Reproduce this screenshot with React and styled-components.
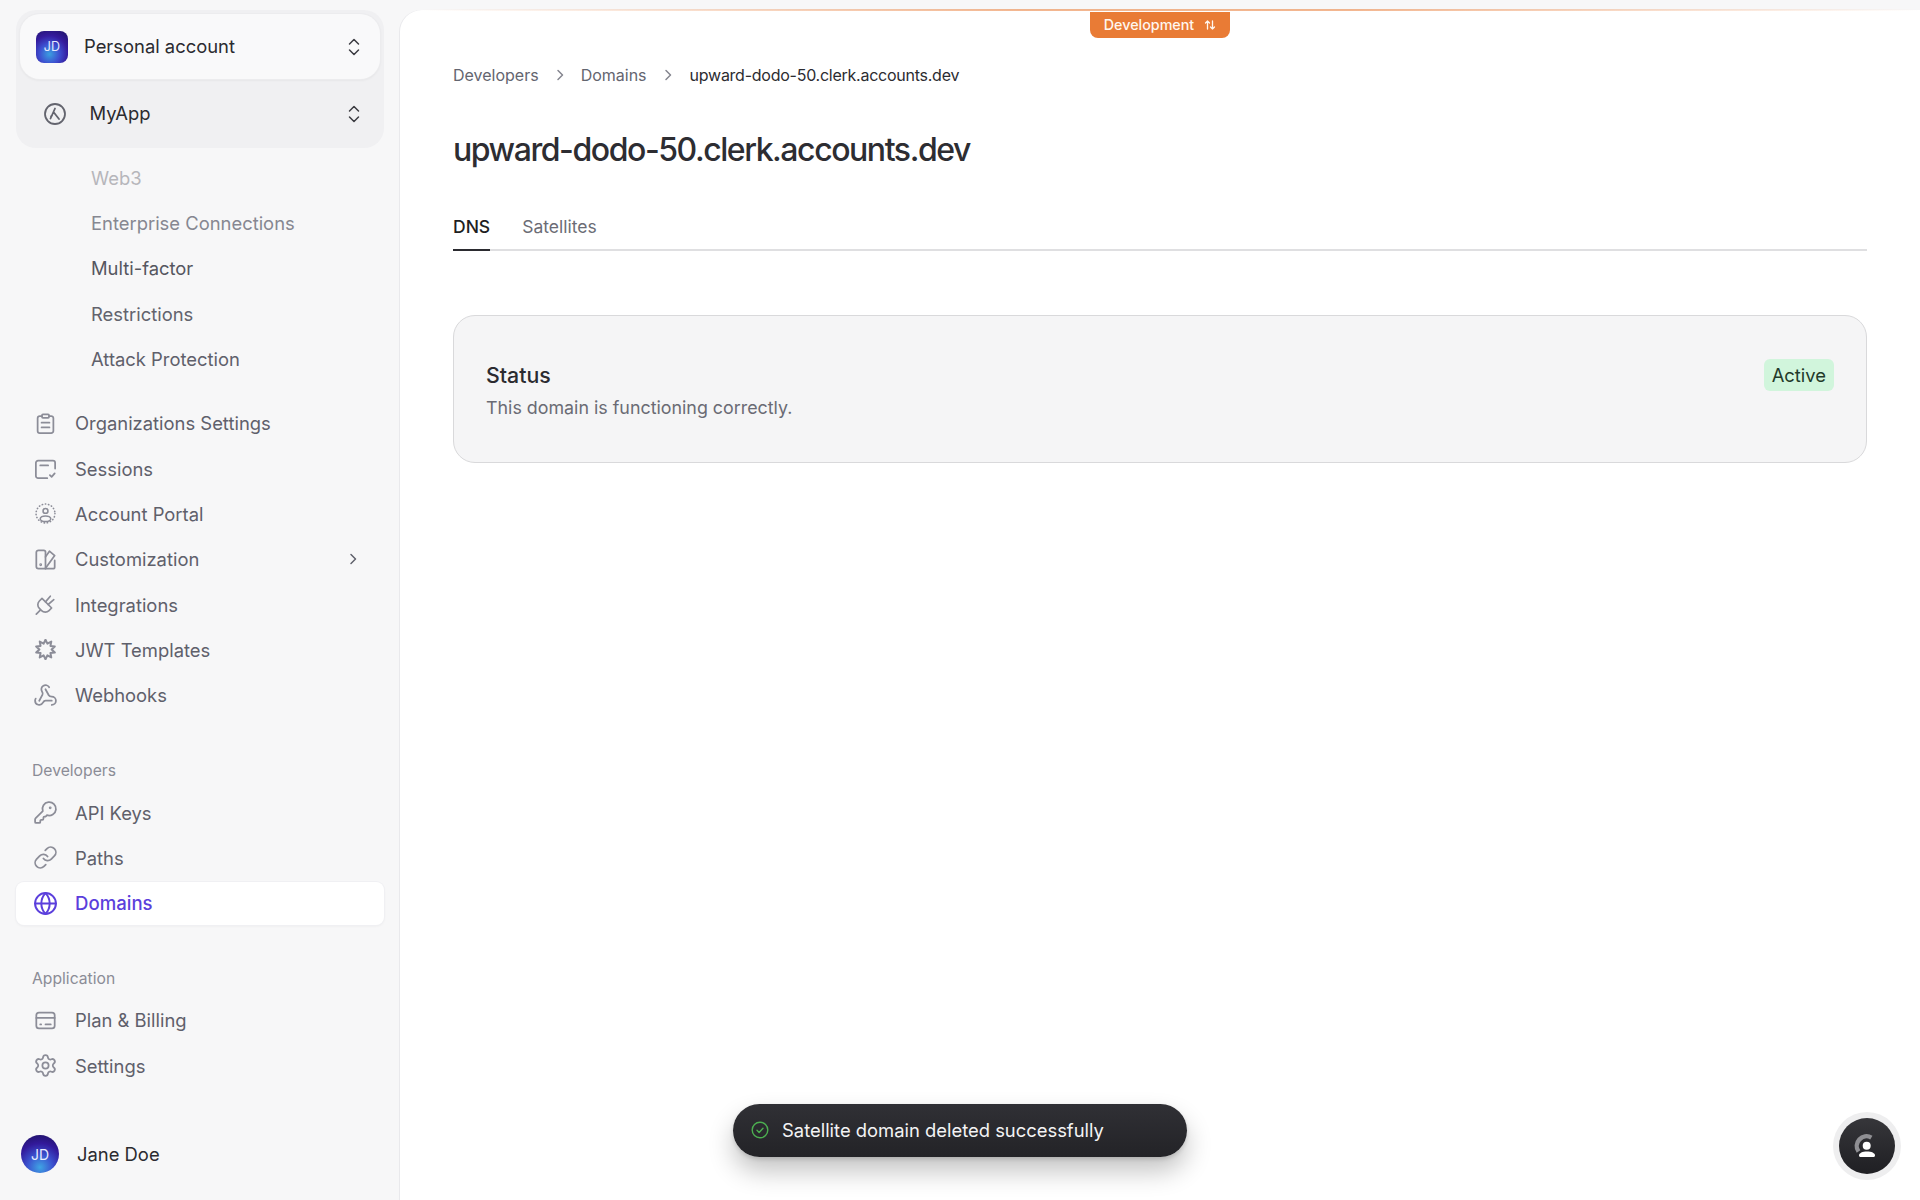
import React from "react";
import styled, { createGlobalStyle } from "styled-components";
import { Webhook, KeyRound, Link as LinkIcon, Globe, Settings } from "lucide-react";

const Global = createGlobalStyle`
  html, body { margin: 0; padding: 0; height: 100%; background: #f7f7f8; }
  body { font-family: Inter, "Liberation Sans", sans-serif; overflow: hidden; }
  * { box-sizing: border-box; }
`;

const Page = styled.div`display: flex; height: 1200px; width: 1920px;`;
const Sidebar = styled.aside`
  width: 400px; flex: none; height: 100%; display: flex; flex-direction: column;
  padding: 10px 16px 27px; background: #f7f7f8;
`;
const SwitchGroup = styled.div`
  background: #f0f0f2; border-radius: 20px; padding: 4px; height: 138px; flex: none;
`;
const AccountCard = styled.div`
  height: 65px; border-radius: 20px; background: #f9f9fa; display: flex; align-items: center;
  padding: 0 20px 0 16px; box-shadow: 0 0 0 1px #ececee, 0 1px 3px rgba(0,0,0,.08);
`;
const Tile = styled.div`
  width: 32px; height: 32px; border-radius: 8px; flex: none; color: #e4e8ff; font-size: 12.5px;
  display: flex; align-items: center; justify-content: center; letter-spacing: .2px;
  background: radial-gradient(circle at 42% 72%, #3a9fe0 0%, #3d4fd0 34%, #351c9e 62%, #1d1261 100%);
`;
const SwitchLabel = styled.span`
  flex: 1; font-size: 18.4px; color: #2b2b30; margin-left: ${p => p.$gap}px; padding-bottom: 2px;
`;
const ProjectRow = styled.div`
  height: 69px; display: flex; align-items: center; padding: 0 20px 0 24px; color: #6f707a;
`;
const SubList = styled.div`margin-top: 7px; flex: none;`;
const SubItem = styled.div`
  height: 45.33px; display: flex; align-items: center; padding-left: 75px; font-size: 18.4px;
  color: ${p => p.$tone};
`;
const MainList = styled.div`margin-top: 19px; flex: none;`;
const NavRow = styled.div`
  height: 45.33px; display: flex; align-items: center; padding: 0 26px 0 19px; font-size: 18.4px;
  color: #5f606b; position: relative;
  svg.nav { width: 21px; height: 21px; flex: none; color: #8c8d98; margin-right: 19px; }
  svg.lucide { width: 25px; height: 25px; margin-left: -2px; margin-right: 17px; }
`;
const ActiveRow = styled(NavRow)`
  color: #5b3fdc; font-weight: 500; font-size: 18.6px; background: #fff; border-radius: 8px; height: 43px; margin: 1px 0;
  box-shadow: 0 0 0 1px #f0f0f3, 0 1px 3px rgba(0,0,0,.06);
  svg.nav { color: #5b3fdc; }
`;
const NavText = styled.span`flex: 1;`;
const SectionLabel = styled.div`
  height: 20px; line-height: 20px; font-size: 15.7px; color: #8b8c96; padding-left: 16px;
  margin: ${p => p.$top}px 0 ${p => p.$bottom}px;
`;
const Footer = styled.div`margin-top: auto; display: flex; align-items: center; padding-left: 5px;`;
const RoundAvatar = styled.div`
  width: 38px; height: 38px; border-radius: 50%; flex: none; color: #e6eaff; font-size: 14px;
  display: flex; align-items: center; justify-content: center;
  background: radial-gradient(circle at 50% 85%, #3fa4e4 0%, #3b52cf 34%, #32199a 64%, #1a1058 100%);
`;
const UserName = styled.span`margin-left: 18px; font-size: 18.4px; color: #2b2b30;`;

const Main = styled.main`
  flex: 1; margin-top: 10px; background: #fff; border-top-left-radius: 22px;
  box-shadow: -1px 0 0 #e9e9ec; padding: 0 53px; position: relative; min-width: 0;
`;
const TopLine = styled.div`
  position: absolute; left: 20px; right: 0; top: -1px; height: 2px;
  background: linear-gradient(90deg, rgba(233,123,53,0) 0%, rgba(233,123,53,.55) 40%, rgba(233,123,53,.55) 62%, rgba(233,123,53,0) 100%);
`;
const EnvBadge = styled.div`
  position: absolute; left: 690px; top: 2px; width: 140px; height: 26px; background: #e97b35; color: #fff6ef;
  border-radius: 0 0 8px 8px; font-size: 14.3px; font-weight: 500; display: flex; align-items: center;
  justify-content: center; gap: 10px; padding-bottom: 1px;
`;
const Crumbs = styled.nav`
  display: flex; align-items: center; gap: 16px; font-size: 16px; color: #64656f; padding-top: 54px; height: 76px;
`;
const CrumbCurrent = styled.span`color: #2c2c31; letter-spacing: -.25px; margin-left: 1px;`;
const Title = styled.h1`
  margin: 43px 0 0; font-size: 32px; line-height: 42px; font-weight: 500; color: #2d2d32; letter-spacing: -1.44px;
`;
const Tabs = styled.div`
  margin-top: 31px; display: flex; gap: 32px; border-bottom: 2px solid #dfdfe1; height: 49px; font-size: 17.5px;
`;
const Tab = styled.div`
  height: 49px; padding-top: 14px; color: ${p => (p.$active ? "#1e1e22" : "#6b6c75")};
  border-bottom: 2px solid ${p => (p.$active ? "#2b2b30" : "transparent")};
  font-weight: ${p => (p.$active ? 500 : 400)};
`;
const StatusCard = styled.section`
  margin-top: 64px; height: 148px; border: 1.5px solid #d9d9db; border-radius: 22px; background: #f5f5f6;
  display: flex; justify-content: space-between; padding: 46px 32px 0;
`;
const StatusTitle = styled.div`font-size: 21.3px; font-weight: 500; color: #2b2b30; line-height: 26px;`;
const StatusText = styled.div`font-size: 17.85px; color: #6a6b74; line-height: 26px; margin-top: 7px;`;
const Pill = styled.div`
  height: 32px; padding: 0 8px; margin-top: -3px; border-radius: 6px; background: #d1f5dc; color: #233a2a; font-size: 18.4px;
  display: flex; align-items: center;
`;
const Toast = styled.div`
  position: absolute; left: 333px; top: 1094px; width: 454px; height: 53px; border-radius: 27px;
  background: linear-gradient(180deg, #303035, #232327); color: #f3f3f4; font-size: 18.4px;
  display: flex; align-items: center; padding: 0 0 1px 18px; gap: 13px;
  box-shadow: 0 14px 26px rgba(0,0,0,.24), 0 2px 4px rgba(0,0,0,.14);
`;
const Fab = styled.div`
  position: absolute; left: 1433px; top: 1102px; width: 68px; height: 68px; border-radius: 50%;
  background: #eeeeef; display: flex; align-items: center; justify-content: center;
`;
const FabInner = styled.div`
  width: 56px; height: 56px; border-radius: 50%; background: linear-gradient(180deg, #36363a, #1f1f23);
  display: flex; align-items: center; justify-content: center;
`;

const Ico = ({ children, size = 21, stroke = 2 }) => (
  <svg className="nav" viewBox="0 0 24 24" width={size} height={size} fill="none" stroke="currentColor"
    strokeWidth={stroke} strokeLinecap="round" strokeLinejoin="round">{children}</svg>
);
const Updown = () => (
  <svg width="12" height="18" viewBox="0 0 12 18" fill="none" stroke="#3b3b41" strokeWidth="1.5" strokeLinecap="round" strokeLinejoin="round">
    <path d="M1.5 6 6 1.5 10.5 6" /><path d="M1.5 12 6 16.5 10.5 12" />
  </svg>
);
const Chevron = ({ color = "#5f606b" }) => (
  <svg width="10" height="12" viewBox="0 0 10 12" fill="none" stroke={color} strokeWidth="1.5" strokeLinecap="round" strokeLinejoin="round">
    <path d="M3 1.5 7.5 6 3 10.5" />
  </svg>
);
const gearPts = Array.from({ length: 20 }, (_, i) => {
  const a = (i * Math.PI) / 10;
  const r = i % 2 ? 7 : 11.2;
  return `${(12 + r * Math.sin(a)).toFixed(2)},${(12 - r * Math.cos(a)).toFixed(2)}`;
}).join(" ");

const icons = {
  org: <Ico><path d="M8 3.5H5.5A2.5 2.5 0 0 0 3 6v14.500A2.500 2.500 0 0 0 5.500 23h13a2.500 2.500 0 0 0 2.500-2.500V6a2.500 2.500 0 0 0-2.500-2.500H16" /><rect x="8" y="1.500" width="8" height="4" rx="1" /><path d="M7.500 11h9M7.500 16.500h9" /></Ico>,
  sessions: <Ico><path d="M23 12V5.500A2.500 2.500 0 0 0 20.500 3h-17A2.500 2.500 0 0 0 1 5.500v15A2.500 2.500 0 0 0 3.500 23H14" /><path d="M6 8.500h9M17 19.500l2 2 3.500-4" /></Ico>,
  portal: <Ico stroke={1.8}><circle cx="12" cy="12" r="10.800" strokeDasharray="0.4 3.2" /><circle cx="12" cy="9" r="2.800" /><ellipse cx="12" cy="18" rx="6" ry="3.200" /></Ico>,
  custom: <Ico><path d="M4 1.500h6a2 2 0 0 1 2 2v19H4a2.500 2.500 0 0 1-2.500-2.500V4A2.500 2.500 0 0 1 4 1.500z" /><circle cx="6.500" cy="18" r=".6" /><path d="M12 9l4.500-6.500 6 5L12 22" /><path d="M12 22.500h8.500a2 2 0 0 0 2-2V13" /></Ico>,
  plug: <Ico stroke={1.9}><path d="M1.500 23 5.800 18.700" /><path d="M8 5l11 11-3 3a6 6 0 0 1-8.500 0l-2.500-2.500a6 6 0 0 1 0-8.500z" /><path d="M12 9l5.500-6.500M15 12l6.500-5.500" /></Ico>,
  jwt: <Ico stroke={2.3}><polygon points={gearPts} /></Ico>,
  hook: <Webhook className="nav" strokeWidth={1.7} />,
  key: <KeyRound className="nav" strokeWidth={1.7} />,
  link: <LinkIcon className="nav" strokeWidth={1.7} />,
  globe: <Globe className="nav" strokeWidth={1.9} />,
  card: <Ico><rect x="1.500" y="3" width="21" height="18" rx="3" /><path d="M1.500 9h21M6 16.500h1M12 16.500h6" /></Ico>,
  gear: <Settings className="nav" strokeWidth={1.7} />,
};

const NavItem = ({ icon, label, more }) => (
  <NavRow>{icons[icon]}<NavText>{label}</NavText>{more && <Chevron />}</NavRow>
);

export default function App() {
  return (
    <Page>
      <Global />
      <Sidebar>
        <SwitchGroup>
          <AccountCard>
            <Tile>JD</Tile>
            <SwitchLabel $gap={16}>Personal account</SwitchLabel>
            <Updown />
          </AccountCard>
          <ProjectRow>
            <svg width="22" height="22" viewBox="0 0 22 22" fill="none" stroke="#63646e" strokeWidth="1.8" strokeLinecap="round" strokeLinejoin="round">
              <circle cx="11" cy="11" r="10" /><path d="M11 5.500 6.500 15.500M9.500 9l5.500 7M8 12.500l-1 1" />
            </svg>
            <SwitchLabel $gap={23.5}>MyApp</SwitchLabel>
            <Updown />
          </ProjectRow>
        </SwitchGroup>
        <SubList>
          <SubItem $tone="#b6b6bb">Web3</SubItem>
          <SubItem $tone="#868791">Enterprise Connections</SubItem>
          <SubItem $tone="#55565f">Multi-factor</SubItem>
          <SubItem $tone="#62636d">Restrictions</SubItem>
          <SubItem $tone="#5f606b">Attack Protection</SubItem>
        </SubList>
        <MainList>
          <NavItem icon="org" label="Organizations Settings" />
          <NavItem icon="sessions" label="Sessions" />
          <NavItem icon="portal" label="Account Portal" />
          <NavItem icon="custom" label="Customization" more />
          <NavItem icon="plug" label="Integrations" />
          <NavItem icon="jwt" label="JWT Templates" />
          <NavItem icon="hook" label="Webhooks" />
        </MainList>
        <SectionLabel $top={43} $bottom={9}>Developers</SectionLabel>
        <NavItem icon="key" label="API Keys" />
        <NavItem icon="link" label="Paths" />
        <ActiveRow>{icons.globe}<NavText>Domains</NavText></ActiveRow>
        <SectionLabel $top={43} $bottom={9}>Application</SectionLabel>
        <NavItem icon="card" label="Plan & Billing" />
        <NavItem icon="gear" label="Settings" />
        <Footer>
          <RoundAvatar>JD</RoundAvatar>
          <UserName>Jane Doe</UserName>
        </Footer>
      </Sidebar>
      <Main>
        <TopLine />
        <EnvBadge>
          Development
          <svg width="12" height="12" viewBox="0 0 12 12" fill="none" stroke="#fff6ef" strokeWidth="1.3" strokeLinecap="round" strokeLinejoin="round">
            <path d="M3.500 10V2M1.500 4l2-2 2 2M8.500 2v8M6.500 8l2 2 2-2" />
          </svg>
        </EnvBadge>
        <Crumbs>
          <span>Developers</span><Chevron color="#85868f" />
          <span>Domains</span><Chevron color="#85868f" />
          <CrumbCurrent>upward-dodo-50.clerk.accounts.dev</CrumbCurrent>
        </Crumbs>
        <Title>upward-dodo-50.clerk.accounts.dev</Title>
        <Tabs>
          <Tab $active>DNS</Tab>
          <Tab>Satellites</Tab>
        </Tabs>
        <StatusCard>
          <div>
            <StatusTitle>Status</StatusTitle>
            <StatusText>This domain is functioning correctly.</StatusText>
          </div>
          <Pill>Active</Pill>
        </StatusCard>
        <Toast>
          <svg width="18" height="18" viewBox="0 0 18 18" fill="none" stroke="#4caf50" strokeWidth="1.4" strokeLinecap="round" strokeLinejoin="round">
            <circle cx="9" cy="9" r="7.8" /><path d="M6 9.300l2.100 2.100L12 7.200" />
          </svg>
          Satellite domain deleted successfully
        </Toast>
        <Fab>
          <FabInner>
            <svg width="28" height="28" viewBox="0 0 28 28" fill="none">
              <path d="M18.35 5.600A9.700 9.700 0 0 0 5.550 19.560" stroke="#8f8f93" strokeWidth="4.500" />
              <circle cx="13.700" cy="13.700" r="4" fill="#fff" />
              <path d="M6 23.500c0-2.500 3.500-4 8-4s8 1.500 8 4c0 1-1 1.500-2 1.500H8c-1 0-2-.5-2-1.500z" fill="#fff" />
            </svg>
          </FabInner>
        </Fab>
      </Main>
    </Page>
  );
}
